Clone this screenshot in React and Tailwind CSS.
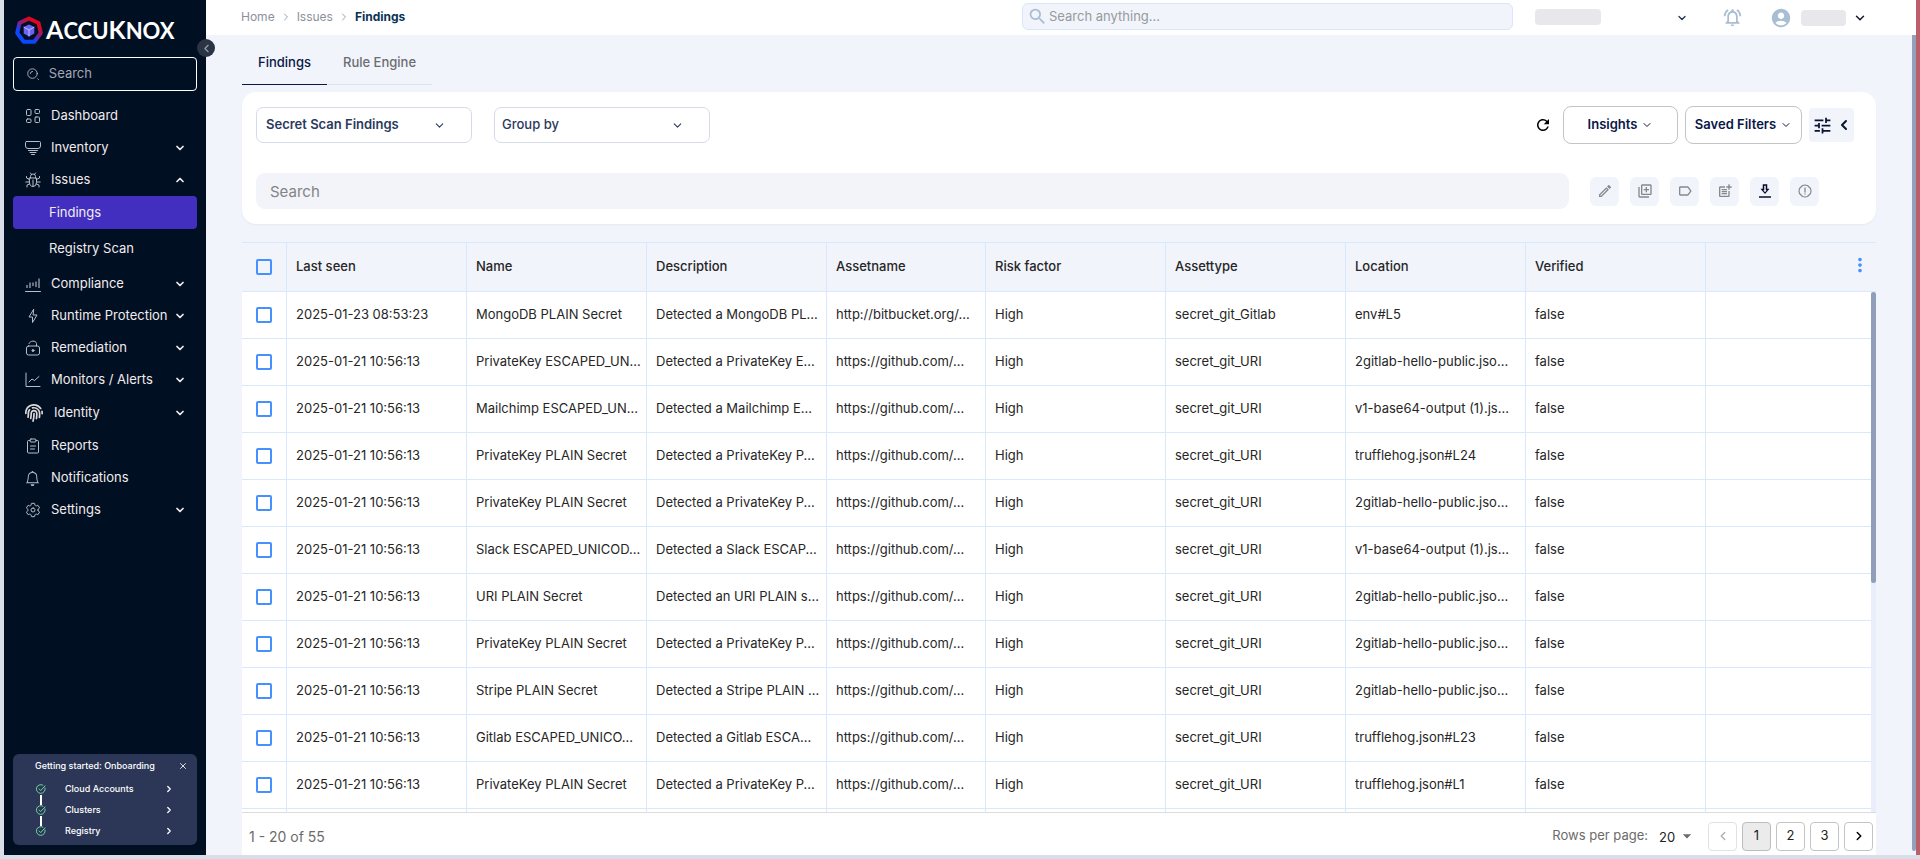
import React from "react";
import {
  MdTune, MdAccountCircle, MdOutlineNotificationsActive, MdSearch, MdOutlineModeEdit,
  MdOutlineLibraryAdd, MdLabelOutline, MdPostAdd, MdMoreVert, MdArrowDropDown, MdRefresh,
} from "react-icons/md";
import { IoSettingsOutline } from "react-icons/io5";
import { FaFingerprint } from "react-icons/fa";
import { BsBell } from "react-icons/bs";
import { ChevronDown, ChevronUp, ChevronLeft, ChevronRight, X } from "lucide-react";

function Line({ size = 16, width = 1, children }) {
  return (
    <svg width={size} height={size} viewBox="0 0 16 16" fill="none" stroke="currentColor" strokeWidth={width} strokeLinecap="round" strokeLinejoin="round" aria-hidden="true">
      {children}
    </svg>
  );
}

const DashboardIcon = () => (
  <Line>
    <rect x="1.5" y="1.5" width="4.5" height="6" rx="1" />
    <rect x="10" y="1.5" width="4.5" height="4" rx="1" />
    <rect x="1.5" y="11" width="4.5" height="3.5" rx="1" />
    <rect x="10" y="9" width="4.5" height="5.5" rx="1" />
  </Line>
);
const InventoryIcon = () => (
  <Line>
    <path d="M1.500 1.500h13a1 1 0 0 1 1 1v3.500a2.500 2.500 0 0 1-2.500 2.500H3A2.500 2.500 0 0 1 .5 6V2.500a1 1 0 0 1 1-1z" />
    <path d="M3.500 10.500h9M5 12.500h6M6.500 14.500h3" />
  </Line>
);
const BugIcon = () => (
  <Line>
    <path d="M5.500 6V4.500a2.500 2.500 0 0 1 5 0V6M5.500 1l1 1.500M10.500 1l-1 1.500" />
    <path d="M4.500 6h7v4.500a3.500 4 0 0 1-7 0z" />
    <path d="M8 8v6M4.500 7.500 1.500 6V4.500M4.500 10H.800M4.500 12l-2.500 1v2M11.500 7.500l3-1.500V4.500M11.500 10h3.700M11.500 12l2.500 1v2" />
  </Line>
);
const BoltIcon = () => (
  <Line>
    <path d="M8.500 1.500 4 9h3.500v5.500L12 7H8.500z" />
  </Line>
);
const ComplianceIcon = () => (
  <Line>
    <path d="M.5 15.500h15" />
    <path d="M2 9v3M5 6.500V12M8 6.500V10M11 5.500V11M14 2.500V12" strokeWidth="1.600" strokeLinecap="butt" opacity="0.700" />
  </Line>
);
const UnlockIcon = () => (
  <Line>
    <rect x="1.500" y="6" width="13" height="9" rx="2" />
    <path d="M4 3.500C5 .5 11 0 11.500 3.500V6" />
    <circle cx="8" cy="10.500" r="1" fill="currentColor" />
  </Line>
);
const ChartIcon = () => (
  <Line>
    <path d="M1 1v13.500h14M4 10l3-3 2.500 1.500L14 4.500" />
  </Line>
);
const ClipboardIcon = () => (
  <Line>
    <path d="M5 2.500H3.500a1 1 0 0 0-1 1v10.500a1 1 0 0 0 1 1h9a1 1 0 0 0 1-1V3.500a1 1 0 0 0-1-1H11" />
    <rect x="5" y="1" width="6" height="3" rx="1" />
    <path d="M5.500 8h5M5.500 11h4" />
  </Line>
);
const LensIcon = () => (
  <Line>
    <circle cx="7.500" cy="7.500" r="5.500" />
    <path d="M5 7.500A2.500 2.500 0 0 1 7.500 5M13.500 13.500l1 1" />
  </Line>
);
const DownloadIcon = () => (
  <svg width="18" height="18" viewBox="0 0 24 24" fill="currentColor" aria-hidden="true">
    <path d="M18 9h-3V3H9v6H6l6 7zM11 11V5h2v6h1.300L12 13.500 9.700 11zM4 19h16v2H4z" />
  </svg>
);
const AlertIcon = () => (
  <Line width={1.2}>
    <path d="M5.500 2.500 8 2l2.500.5 3 3 .5 2.500-.5 2.500-3 3L8 14l-2.500-.5-3-3L2 8l.5-2.500z" />
    <path d="M8 5v4M8 10.800v.2" strokeWidth="1.300" />
  </Line>
);
const CheckIcon = () => (
  <Line size={10} width={1.5}>
    <path d="M14.500 6.500A7 7 0 1 1 11 1.800" />
    <path d="m5 8 2.500 2.500L14.500 3" />
  </Line>
);

function Logo() {
  return (
    <div className="flex items-center gap-[3px] pl-0.5 text-white">
      <svg width="28" height="29" viewBox="0 0 28 29" aria-hidden="true">
        <defs>
          <linearGradient id="ring" x1="0.8" y1="0.1" x2="0.25" y2="0.9">
            <stop offset="0.1" stopColor="#e0061c" />
            <stop offset="0.5" stopColor="#7a2390" />
            <stop offset="0.8" stopColor="#0c47ff" />
          </linearGradient>
        </defs>
        <path d="M14 2.500 23.500 7 25.800 17 19.300 25.800H8.700L2.200 17 4.500 7z" fill="none" stroke="url(#ring)" strokeWidth="4" strokeLinejoin="round" />
        <path d="M14 8.500l5.300 2.600v6.300L14 20.400l-5.300-3v-6.300z" fill="#6b63f6" />
        <path d="M8.700 11.100 14 14l5.300-2.900M14 14v6.400" fill="none" stroke="#c9c6ff" strokeWidth="0.900" />
      </svg>
      <span className="font-['Lato',sans-serif] text-[22px] leading-7 font-bold">
        <span className="text-[25px]">A</span>CCU<span className="text-[25px]">K</span>NOX
      </span>
    </div>
  );
}

function NavItem({ icon, label, chevron, tall }) {
  return (
    <a href="#" className={(tall ? "h-[34px] " : "h-8 ") + "flex shrink-0 items-center pr-[11px] pl-3 text-[13px] text-[#f1ecec]"}>
      <span className={(tall ? "w-[26px] text-[#dcd8da] " : "w-[26px] text-[#b9bec8] ") + "shrink-0"}>{icon}</span>
      <span className={(tall ? "pl-[3px] " : "") + "flex-1 whitespace-nowrap"}>{label}</span>
      {chevron === "down" && <ChevronDown size={12} strokeWidth={3.5} />}
      {chevron === "up" && <ChevronUp size={12} strokeWidth={3.5} />}
    </a>
  );
}

function Sidebar() {
  return (
    <aside className="relative flex w-[202px] shrink-0 flex-col bg-[#010f23] px-[9px] pt-[15px] pb-[10px]">
      <Logo />
      <button aria-label="Collapse menu" className="absolute top-[39px] -right-[9px] z-10 flex h-[18px] w-[18px] items-center justify-center rounded-full bg-[#2b3445] text-[#9aa1ae]">
        <ChevronLeft size={13} />
      </button>
      <label className="mt-3 flex h-[34px] shrink-0 items-center rounded border border-white pl-3 text-[#b9bec8]">
        <LensIcon />
        <input aria-label="Search menu" placeholder="Search" className="ml-[9px] w-full min-w-0 bg-transparent text-[13px] outline-none placeholder:text-[#a3a8b2]" />
      </label>
      <nav className="mt-[9px] flex flex-col">
        <NavItem icon={<DashboardIcon />} label="Dashboard" />
        <NavItem icon={<InventoryIcon />} label="Inventory" chevron="down" />
        <NavItem icon={<BugIcon />} label="Issues" chevron="up" />
        <a href="#" className="flex h-[33px] items-center rounded bg-[#432fbf] pl-9 text-[13px] text-[#f1ecec]">Findings</a>
        <a href="#" className="my-[3px] flex h-[33px] items-center pl-9 text-[13px] text-[#f1ecec]">Registry Scan</a>
        <NavItem icon={<ComplianceIcon />} label="Compliance" chevron="down" />
        <NavItem icon={<BoltIcon />} label="Runtime Protection" chevron="down" />
        <NavItem icon={<UnlockIcon />} label="Remediation" chevron="down" />
        <NavItem icon={<ChartIcon />} label="Monitors / Alerts" chevron="down" />
        <NavItem icon={<FaFingerprint size={18} />} label="Identity" chevron="down" tall />
        <NavItem icon={<ClipboardIcon />} label="Reports" />
        <NavItem icon={<BsBell size={15} />} label="Notifications" />
        <NavItem icon={<IoSettingsOutline size={16} />} label="Settings" chevron="down" />
      </nav>
      <section className="mt-auto rounded-md bg-[#2c3757] pb-1 text-[9px] font-medium text-white">
        <div className="flex h-[24px] items-center justify-between pr-[9px] pl-[22px]">
          <h2>Getting started: Onboarding</h2>
          <button aria-label="Close"><X size={10} /></button>
        </div>
        <ol>
          {["Cloud Accounts", "Clusters", "Registry"].map((s, i) => (
            <li key={s} className="flex h-[21px] items-center pl-[23px]">
              <span className="relative flex text-[#6fe0a0]">
                {i < 2 && <span className="absolute top-[11px] left-1 h-[10px] w-0.5 bg-white" />}
                <CheckIcon />
              </span>
              <a href="#" className="flex flex-1 items-center justify-between pr-[23px] pl-[19px]">
                {s}
                <ChevronRight size={10} strokeWidth={3} />
              </a>
            </li>
          ))}
        </ol>
      </section>
    </aside>
  );
}

function Header() {
  return (
    <header className="flex h-[35px] shrink-0 items-center bg-white pr-[49px] pl-[35px]">
      <nav aria-label="Breadcrumb" className="flex items-center pb-0.5 text-xs text-[#8a919c]">
        <a href="#">Home</a>
        <ChevronRight size={12} className="mx-[5px] text-[#9aa3b2]" />
        <a href="#">Issues</a>
        <ChevronRight size={12} className="mx-[5px] text-[#9aa3b2]" />
        <a href="#" className="font-bold text-[#0b3358]">Findings</a>
      </nav>
      <label className="mb-0.5 ml-auto flex h-[27px] w-[491px] items-center rounded-md border border-[#d8e7fc] bg-[#f1f4fa] pl-1">
        <MdSearch size={21} className="shrink-0 text-[#a9bdd3]" />
        <input aria-label="Search anything" placeholder="Search anything..." className="w-full bg-transparent pl-[1px] text-[13px] outline-none placeholder:text-[#969a9f]" />
      </label>
      <span className="mb-0.5 ml-[22px] h-4 w-[66px] rounded bg-[#e8e7ec]" />
      <button aria-label="Workspace" className="ml-[75px] text-[#1d2f55]"><ChevronDown size={12} strokeWidth={2.5} /></button>
      <button aria-label="Notifications" className="ml-[34px] text-[#a9bdd3]"><MdOutlineNotificationsActive size={21} /></button>
      <MdAccountCircle size={22} className="ml-[27px] text-[#a9bdd3]" />
      <span className="ml-[9px] h-4 w-[45px] rounded bg-[#e8e7ec]" />
      <button aria-label="Account" className="ml-[7px] text-[#111827]"><ChevronDown size={14} strokeWidth={2.5} /></button>
    </header>
  );
}

function SelectBox({ label, bold }) {
  return (
    <div className="relative w-[216px]">
      <select aria-label={label} className={(bold ? "pl-[9px] font-semibold " : "pl-[7px] font-medium ") + "h-9 w-full appearance-none rounded-[7px] border border-[#d5dbe9] bg-white text-[13px] text-[#2b3a5c]"}>
        <option>{label}</option>
      </select>
      <ChevronDown size={13} className="pointer-events-none absolute top-3 right-[26px] text-[#2b3a5c]" />
    </div>
  );
}

function Filters() {
  const actions = [
    ["Edit", <MdOutlineModeEdit size={16} />],
    ["Duplicate", <MdOutlineLibraryAdd size={16} />],
    ["Label", <MdLabelOutline size={16} />],
    ["Add note", <MdPostAdd size={16} />],
    ["Download", <DownloadIcon />],
    ["Report", <AlertIcon />],
  ];
  const outlined = "flex h-[38px] items-center justify-center gap-1 rounded-lg border border-[#c4c4c4] text-[13px] font-semibold text-[#0a1747]";
  return (
    <section className="mt-[7px] flex shrink-0 flex-col gap-[29px] rounded-[14px] bg-white px-[14px] pt-[14px] pb-[15px] shadow-xs">
      <div className="flex items-center">
        <SelectBox label="Secret Scan Findings" bold />
        <div className="ml-[22px]"><SelectBox label="Group by" /></div>
        <button aria-label="Refresh" className="ml-auto text-black"><MdRefresh size={18} /></button>
        <button className={outlined + " ml-[11px] w-[115px]"}>Insights <ChevronDown size={12} /></button>
        <button className={outlined + " ml-[7px] w-[117px]"}>Saved Filters <ChevronDown size={12} /></button>
        <button aria-label="Toggle filters" className="mr-2 ml-[7px] flex h-[34px] w-[45px] items-center justify-center gap-[3px] rounded bg-[#f1f4fa] text-[#0a1430]">
          <MdTune size={21} />
          <ChevronLeft size={16} strokeWidth={3} />
        </button>
      </div>
      <div className="flex items-center">
        <input aria-label="Search findings" placeholder="Search" className="h-9 min-w-0 flex-1 rounded-[9px] bg-[#f3f4f9] px-[14px] text-[15px] outline-none placeholder:text-[#828486]" />
        <div className="mr-[43px] ml-[21px] flex gap-[11px]">
          {actions.map(([name, icon]) => (
            <button key={name} aria-label={name} className={(name === "Download" ? "text-[#0a0a2e] " : "text-[#86888b] ") + "flex h-[29px] w-[29px] items-center justify-center rounded-md bg-[#f1f4fa]"}>{icon}</button>
          ))}
        </div>
      </div>
    </section>
  );
}

const rows = [
  ["2025-01-23 08:53:23", "MongoDB PLAIN Secret", "Detected a MongoDB PL...", "http://bitbucket.org/...", "secret_git_Gitlab", "env#L5"],
  ["2025-01-21 10:56:13", "PrivateKey ESCAPED_UN...", "Detected a PrivateKey E...", "https://github.com/...", "secret_git_URI", "2gitlab-hello-public.jso..."],
  ["2025-01-21 10:56:13", "Mailchimp ESCAPED_UN...", "Detected a Mailchimp E...", "https://github.com/...", "secret_git_URI", "v1-base64-output (1).js..."],
  ["2025-01-21 10:56:13", "PrivateKey PLAIN Secret", "Detected a PrivateKey P...", "https://github.com/...", "secret_git_URI", "trufflehog.json#L24"],
  ["2025-01-21 10:56:13", "PrivateKey PLAIN Secret", "Detected a PrivateKey P...", "https://github.com/...", "secret_git_URI", "2gitlab-hello-public.jso..."],
  ["2025-01-21 10:56:13", "Slack ESCAPED_UNICOD...", "Detected a Slack ESCAP...", "https://github.com/...", "secret_git_URI", "v1-base64-output (1).js..."],
  ["2025-01-21 10:56:13", "URI PLAIN Secret", "Detected an URI PLAIN s...", "https://github.com/...", "secret_git_URI", "2gitlab-hello-public.jso..."],
  ["2025-01-21 10:56:13", "PrivateKey PLAIN Secret", "Detected a PrivateKey P...", "https://github.com/...", "secret_git_URI", "2gitlab-hello-public.jso..."],
  ["2025-01-21 10:56:13", "Stripe PLAIN Secret", "Detected a Stripe PLAIN ...", "https://github.com/...", "secret_git_URI", "2gitlab-hello-public.jso..."],
  ["2025-01-21 10:56:13", "Gitlab ESCAPED_UNICO...", "Detected a Gitlab ESCA...", "https://github.com/...", "secret_git_URI", "trufflehog.json#L23"],
  ["2025-01-21 10:56:13", "PrivateKey PLAIN Secret", "Detected a PrivateKey P...", "https://github.com/...", "secret_git_URI", "trufflehog.json#L1"],
];
const heads = ["Last seen", "Name", "Description", "Assetname", "Risk factor", "Assettype", "Location", "Verified"];

function Tick({ label }) {
  return <input type="checkbox" aria-label={label} className="block h-4 w-4 appearance-none rounded-xs border-2 border-[#4791ff]" />;
}

function FindingsTable() {
  return (
    <section className="mt-[18px] flex min-h-0 flex-1 flex-col bg-white">
      <div className="relative min-h-0 flex-1 overflow-hidden">
        <table className="w-full table-fixed border-separate border-spacing-0 text-[13px] text-[#262626]">
          <colgroup>
            <col className="w-[45px]" />
            <col className="w-[180px]" />
            <col className="w-[180px]" />
            <col className="w-[180px]" />
            <col className="w-[159px]" />
            <col className="w-[180px]" />
            <col className="w-[180px]" />
            <col className="w-[180px]" />
            <col className="w-[180px]" />
            <col />
          </colgroup>
          <thead>
            <tr className="h-[50px] bg-[#f1f4fa] text-left">
              <th className="border-y border-r border-[#d9e8fc] pl-[14px]"><Tick label="Select all" /></th>
              {heads.map((h) => (
                <th key={h} className="border-y border-r border-[#d9e8fc] pl-[9px] font-medium">{h}</th>
              ))}
              <th className="border-y border-[#d9e8fc] pr-[5px] pb-1">
                <button aria-label="Columns" className="ml-auto block text-[#4791ff]"><MdMoreVert size={22} /></button>
              </th>
            </tr>
          </thead>
          <tbody>
            {rows.map(([seen, name, desc, asset, type, loc], i) => (
              <tr key={i} className="h-[47px]">
                <td className="border-r border-b border-[#d9e8fc] pl-[14px]"><Tick label={"Select " + name} /></td>
                {[seen, name, desc, asset, "High", type, loc, "false"].map((c, j) => (
                  <td key={j} className="overflow-hidden border-r border-b border-[#d9e8fc] pl-[9px] whitespace-nowrap">{c}</td>
                ))}
                <td className="border-b border-[#d9e8fc]" />
              </tr>
            ))}
            <tr className="h-[47px]">
              {[0, 1, 2, 3, 4, 5, 6, 7, 8].map((c) => (
                <td key={c} className="border-r border-[#d9e8fc]" />
              ))}
              <td />
            </tr>
          </tbody>
        </table>
        <div className="absolute top-[50px] right-0 bottom-0 w-[5px] bg-[#e8eefa]">
          <div className="h-[56%] rounded-sm bg-[#8f9fba]" />
        </div>
      </div>
      <Pager />
    </section>
  );
}

function Pager() {
  const box = "flex h-[29px] w-[29px] items-center justify-center rounded border ";
  return (
    <footer className="flex h-[43px] shrink-0 items-center border-t border-[#dcdcdc] pt-1 pr-[3px] pl-[7px] text-[#6b6b6b]">
      <span className="text-[14px]">1 - 20 of 55</span>
      <label htmlFor="per-page" className="ml-auto text-[13px]">Rows per page:</label>
      <div className="relative ml-[11px] w-[36px]">
        <select id="per-page" className="w-full appearance-none bg-transparent text-[13px] text-[#222222]"><option>20</option></select>
        <MdArrowDropDown size={20} className="pointer-events-none absolute top-0.5 -right-0.5 text-[#6b6b6b]" />
      </div>
      <nav aria-label="Pages" className="ml-[13px] flex gap-[5px] text-[13px] text-[#222222]">
        <button aria-label="Previous" disabled className={box + "border-[#e2e2e2] text-[#b0b0b0]"}><ChevronLeft size={14} strokeWidth={2.5} /></button>
        <button className={box + "border-[#bdbdbd] bg-[#ebebeb]"}>1</button>
        <button className={box + "border-[#c4c4c4]"}>2</button>
        <button className={box + "border-[#c4c4c4]"}>3</button>
        <button aria-label="Next" className={box + "border-[#c4c4c4] text-black"}><ChevronRight size={14} strokeWidth={2.5} /></button>
      </nav>
    </footer>
  );
}

export default function App() {
  return (
    <div className="flex h-screen flex-col bg-[#d8dfe9] pb-1 pl-1 font-['Inter',sans-serif]">
      <div className="flex min-h-0 flex-1 border-r-4 border-[#bd5f6a]">
        <Sidebar />
        <div className="flex min-w-0 flex-1 flex-col">
          <Header />
          <div className="flex min-h-0 flex-1 bg-[#f1f4fa]">
            <main className="flex min-w-0 flex-1 flex-col px-9">
              <div role="tablist" className="flex h-[50px] w-[190px] shrink-0 border-b border-[#dde4f0] text-[13px] font-medium">
                <button role="tab" aria-selected="true" className="-mb-px w-[85px] border-b border-[#0a1747] pt-[6px] text-[#0a1747]">Findings</button>
                <button role="tab" aria-selected="false" className="flex-1 pt-[6px] text-[#6b6d70]">Rule Engine</button>
              </div>
              <Filters />
              <FindingsTable />
            </main>
            <div className="mb-1 w-1 shrink-0 rounded-b-sm bg-[#93a1bb]" />
          </div>
        </div>
      </div>
    </div>
  );
}
